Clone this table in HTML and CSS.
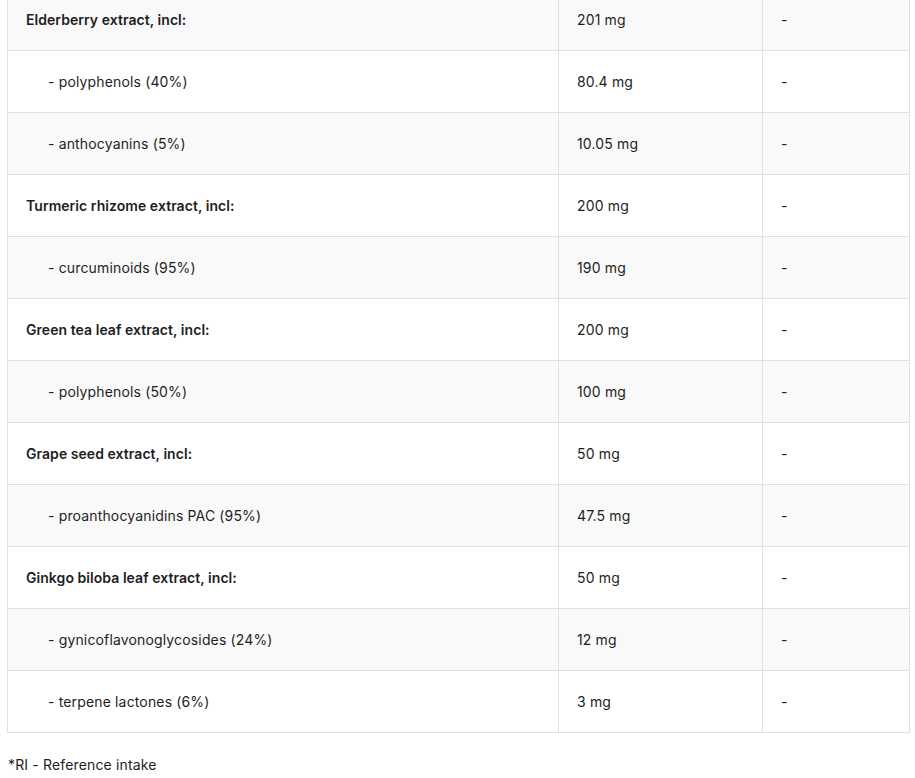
FILE: index.html
```html
<!DOCTYPE html>
<html lang="en">
<head>
<meta charset="utf-8">
<title>Ingredients</title>
<link rel="stylesheet" href="styles.css">
</head>
<body>
<div class="page">
  <table class="facts">
    <colgroup>
      <col class="c-name">
      <col class="c-amount">
      <col class="c-ri">
    </colgroup>
    <tbody>
      <tr><td class="main">Elderberry extract, incl:</td><td>201 mg</td><td>-</td></tr>
      <tr><td class="sub">- polyphenols (40%)</td><td>80.4 mg</td><td>-</td></tr>
      <tr><td class="sub">- anthocyanins (5%)</td><td>10.05 mg</td><td>-</td></tr>
      <tr><td class="main">Turmeric rhizome extract, incl:</td><td>200 mg</td><td>-</td></tr>
      <tr><td class="sub">- curcuminoids (95%)</td><td>190 mg</td><td>-</td></tr>
      <tr><td class="main">Green tea leaf extract, incl:</td><td>200 mg</td><td>-</td></tr>
      <tr><td class="sub">- polyphenols (50%)</td><td>100 mg</td><td>-</td></tr>
      <tr><td class="main">Grape seed extract, incl:</td><td>50 mg</td><td>-</td></tr>
      <tr><td class="sub">- proanthocyanidins PAC (95%)</td><td>47.5 mg</td><td>-</td></tr>
      <tr><td class="main">Ginkgo biloba leaf extract, incl:</td><td>50 mg</td><td>-</td></tr>
      <tr><td class="sub">- gynicoflavonoglycosides (24%)</td><td>12 mg</td><td>-</td></tr>
      <tr><td class="sub">- terpene lactones (6%)</td><td>3 mg</td><td>-</td></tr>
    </tbody>
  </table>
  <p class="note">*RI - Reference intake</p>
</div>
</body>
</html>
```

FILE: styles.css
```css
html, body {
  margin: 0;
  padding: 0;
  background: #ffffff;
}
body {
  font-family: "Inter", "Open Sans", sans-serif;
  font-size: 14px;
  color: #1e1e1e;
  letter-spacing: 0.15px;
}
.page {
  padding: 0 6px 0 7px;
  margin-top: -12px;
}
.facts {
  width: 902px;
  border-collapse: collapse;
  table-layout: fixed;
}
.c-name { width: 551px; }
.c-amount { width: 204px; }
.c-ri { width: 147px; }
.facts td {
  border: 1px solid #e0e0e0;
  height: 61px;
  padding: 0 18px;
  vertical-align: middle;
  line-height: 21px;
}
.facts tr:nth-child(odd) td {
  background: #f9f9f9;
}
.facts td.main {
  font-weight: 600;
  letter-spacing: 0.05px;
}
.facts td.sub {
  padding-left: 40px;
}
.note {
  margin: 21px 0 0 1px;
  line-height: 21px;
}
```
